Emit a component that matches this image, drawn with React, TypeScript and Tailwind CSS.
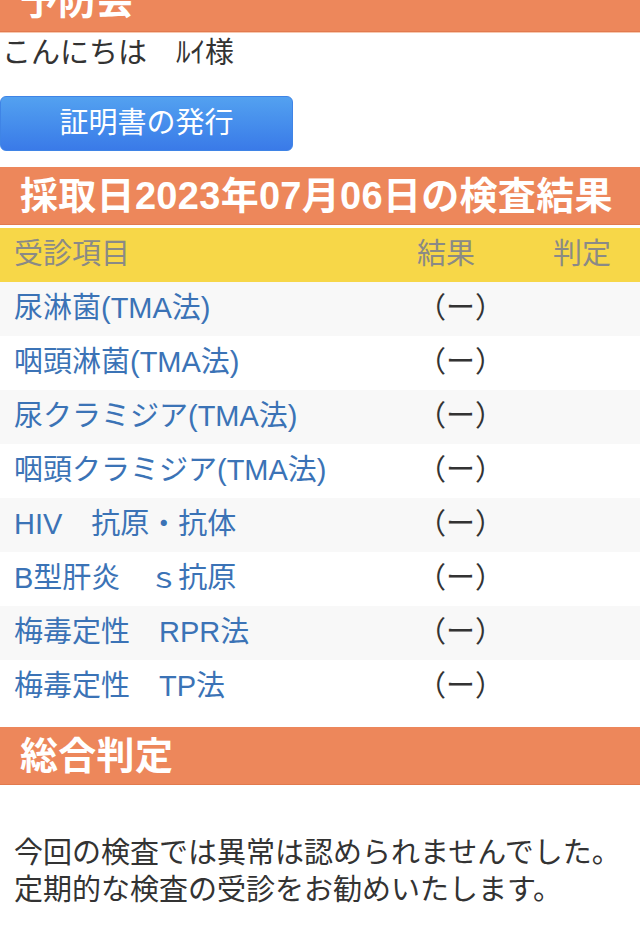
const rows = [
  '尿淋菌(TMA法)',
  '咽頭淋菌(TMA法)',
  '尿クラミジア(TMA法)',
  '咽頭クラミジア(TMA法)',
  'HIV　抗原・抗体',
  'B型肝炎　ｓ抗原',
  '梅毒定性　RPR法',
  '梅毒定性　TP法',
];

const font = { fontFamily: '"Liberation Sans", "Noto Sans CJK JP", sans-serif' };

const SectionTitle = ({ children }: { children: React.ReactNode }) => (
  <div className="h-[58px] bg-[#ed875b] border-b border-b-[#e27a4e] flex items-center pl-[20px]">
    <h2 className="text-[38px] leading-none font-bold text-white tracking-[0.3px]">{children}</h2>
  </div>
);

const App = () => {
  return (
    <div className="w-[640px] min-h-[938px] bg-white text-[29px] text-[#333]" style={font}>
      <header className="h-[32px] overflow-hidden bg-[#ed875b] border-b border-b-[#e27a4e]">
        <h1 className="mt-[-18px] pl-[20px] text-[38px] leading-none font-bold text-white">予防会</h1>
      </header>
      <div className="h-px bg-[#f8c9b0]"></div>

      <p className="pl-[2px] leading-[40px]">こんにちは　ﾙｲ様</p>

      <button className="mt-[23px] w-[293px] h-[55px] rounded-md border border-[#3f84e6] bg-gradient-to-b from-[#53a1f0] to-[#3a7ae8] text-white text-[29px] leading-none">
        証明書の発行
      </button>

      <div className="mt-[16px]">
        <SectionTitle>採取日2023年07月06日の検査結果</SectionTitle>
      </div>

      <div className="mt-[3px]">
        <div className="grid grid-cols-[403px_136px_1fr] items-center h-[54px] px-[14px] bg-[#f7d748] text-[#8a8a86]">
          <span>受診項目</span>
          <span>結果</span>
          <span>判定</span>
        </div>
        {rows.map((name, i) => (
          <div
            key={name}
            className={`grid grid-cols-[403px_136px_1fr] items-center h-[54px] px-[14px] ${
              i % 2 === 0 ? 'bg-[#f8f8f8]' : 'bg-white'
            }`}
          >
            <span className="text-[#3b73b6] whitespace-nowrap">{name}</span>
            <span className="text-[#333]">（ー）</span>
            <span></span>
          </div>
        ))}
      </div>

      <div className="mt-[13px]">
        <SectionTitle>総合判定</SectionTitle>
      </div>

      <p className="mt-[50px] px-[14px] leading-[37px]">
        今回の検査では異常は認められませんでした。
        <br />
        定期的な検査の受診をお勧めいたします。
      </p>
    </div>
  );
};

export default App;
